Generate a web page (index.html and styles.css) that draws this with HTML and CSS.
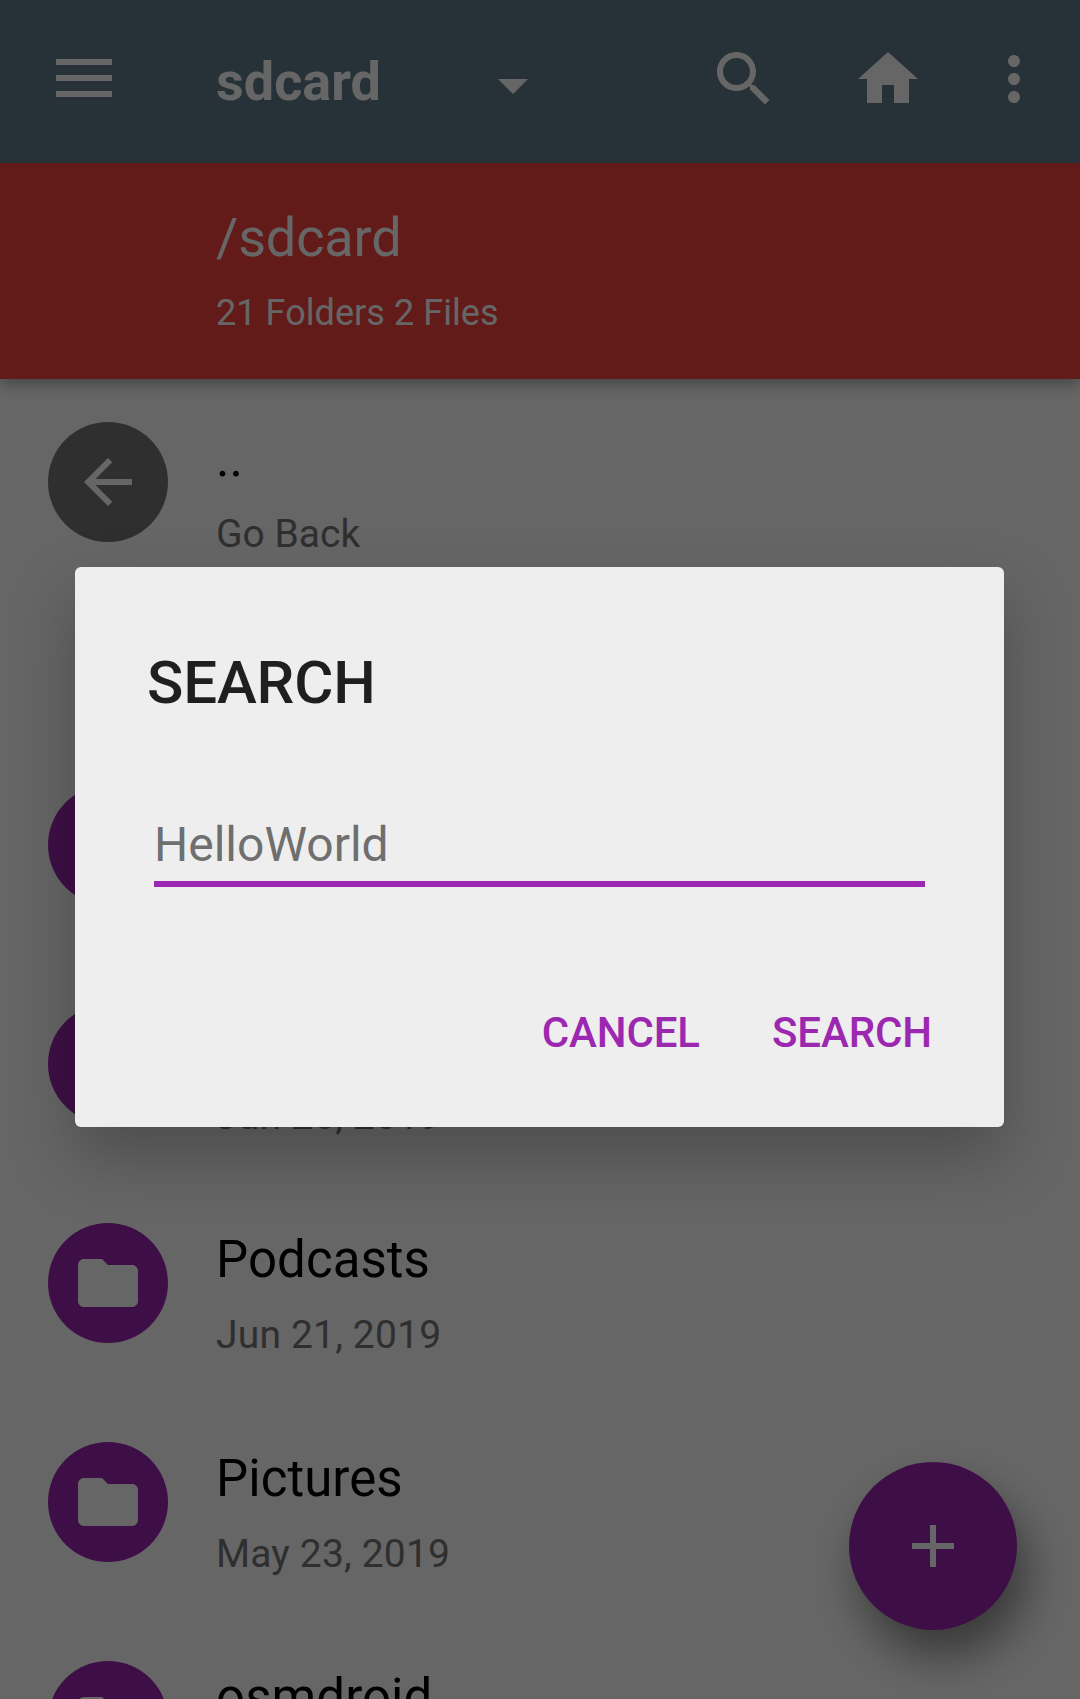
FILE: index.html
```html
<!DOCTYPE html>
<html lang="en">
<head>
<meta charset="utf-8">
<title>sdcard</title>
<link rel="stylesheet" href="styles.css">
</head>
<body>
<div class="screen">
  <header class="header">
    <div class="toolbar">
      <svg class="menu-icon" viewBox="0 0 56 38"><path d="M0 0h56v6H0zM0 16h56v6H0zM0 32h56v6H0z"/></svg>
      <h1 class="toolbar-title">sdcard</h1>
      <svg class="caret" viewBox="0 0 30 15"><path d="M0 0l15 15L30 0z"/></svg>
      <nav class="actions">
        <svg class="icon" viewBox="0 0 24 24"><path d="M15.5 14h-.79l-.28-.27C15.41 12.59 16 11.11 16 9.5 16 5.91 13.09 3 9.5 3S3 5.91 3 9.5 5.91 16 9.5 16c1.61 0 3.09-.59 4.23-1.57l.27.28v.79l5 4.99L20.49 19l-4.99-5zm-6 0C7.01 14 5 11.99 5 9.5S7.01 5 9.5 5 14 7.01 14 9.5 11.99 14 9.5 14z"/></svg>
        <svg class="icon" viewBox="0 0 24 24"><path d="M10 20v-6h4v6h5v-8h3L12 3 2 12h3v8z"/></svg>
        <svg class="icon" viewBox="0 0 24 24"><path d="M12 8c1.1 0 2-.9 2-2s-.9-2-2-2-2 .9-2 2 .9 2 2 2zm0 2c-1.1 0-2 .9-2 2s.9 2 2 2 2-.9 2-2-.9-2-2-2zm0 6c-1.1 0-2 .9-2 2s.9 2 2 2 2-.9 2-2-.9-2-2-2z"/></svg>
      </nav>
    </div>
    <div class="path-bar">
      <p class="path">/sdcard</p>
      <p class="summary">21 Folders 2 Files</p>
    </div>
  </header>

  <main class="list">
    <div class="row row-back">
      <span class="avatar avatar-grey"><svg class="icon" viewBox="0 0 24 24"><path d="M20 11H7.83l5.59-5.59L12 4l-8 8 8 8 1.41-1.41L7.83 13H20v-2z"/></svg></span>
      <div class="text"><p class="name">..</p><p class="meta">Go Back</p></div>
    </div>
    <div class="row">
      <span class="avatar"></span>
    </div>
    <div class="row">
      <span class="avatar"></span>
      <div class="text"><p class="name">&nbsp;</p><p class="meta date">Jun 26, 2019</p></div>
    </div>
    <div class="row">
      <span class="avatar"><svg class="icon" viewBox="0 0 24 24"><path d="M10 4H4c-1.1 0-1.99.9-1.99 2L2 18c0 1.1.9 2 2 2h16c1.1 0 2-.9 2-2V8c0-1.1-.9-2-2-2h-8l-2-2z"/></svg></span>
      <div class="text"><p class="name">Podcasts</p><p class="meta date">Jun 21, 2019</p></div>
    </div>
    <div class="row">
      <span class="avatar"><svg class="icon" viewBox="0 0 24 24"><path d="M10 4H4c-1.1 0-1.99.9-1.99 2L2 18c0 1.1.9 2 2 2h16c1.1 0 2-.9 2-2V8c0-1.1-.9-2-2-2h-8l-2-2z"/></svg></span>
      <div class="text"><p class="name">Pictures</p><p class="meta date">May 23, 2019</p></div>
    </div>
    <div class="row">
      <span class="avatar"><svg class="icon" viewBox="0 0 24 24"><path d="M10 4H4c-1.1 0-1.99.9-1.99 2L2 18c0 1.1.9 2 2 2h16c1.1 0 2-.9 2-2V8c0-1.1-.9-2-2-2h-8l-2-2z"/></svg></span>
      <div class="text"><p class="name">osmdroid</p></div>
    </div>
  </main>

  <div class="fab"><svg class="icon" viewBox="0 0 24 24"><path d="M19 13h-6v6h-2v-6H5v-2h6V5h2v6h6v2z"/></svg></div>

  <div class="scrim">
    <section class="dialog">
      <h2 class="dialog-title">SEARCH</h2>
      <div class="field">HelloWorld</div>
      <div class="buttons">
        <span class="button">CANCEL</span>
        <span class="button">SEARCH</span>
      </div>
    </section>
  </div>
</div>
</body>
</html>
```
FILE: styles.css
```css
* {
  box-sizing: border-box;
}

body,
h1,
h2,
p {
  margin: 0;
}

body {
  font-family: Roboto, sans-serif;
}

svg {
  display: block;
  flex: none;
  fill: #fff;
}

.icon {
  width: 72px;
  height: 72px;
}

.screen {
  position: relative;
  width: 1080px;
  height: 1699px;
  overflow: hidden;
  background: #fff;
  color: #000;
}

/* Header */
.header {
  position: relative;
  color: #fff;
  box-shadow: 0 6px 14px rgba(0, 0, 0, 0.3);
}

.toolbar {
  display: flex;
  align-items: flex-start;
  height: 163px;
  padding: 43px 30px 0 56px;
  background: #607d8b;
}

.menu-icon {
  width: 56px;
  height: 38px;
  margin-top: 16px;
}

.toolbar-title {
  width: 282px;
  margin: 7px 0 0 104px;
  font-size: 54px;
  line-height: 64px;
  font-weight: 700;
}

.caret {
  width: 30px;
  height: 15px;
  margin-top: 36px;
}

.actions {
  display: flex;
  margin-left: auto;
}

.actions .icon + .icon {
  margin-left: 72px;
}

.actions .icon:last-child {
  margin-left: 54px;
}

.path-bar {
  height: 216px;
  padding: 43px 0 0 216px;
  background: #f4443e;
}

.path {
  font-size: 54px;
  line-height: 64px;
  letter-spacing: -0.15px;
}

.summary {
  margin-top: 22px;
  font-size: 36px;
  line-height: 42px;
  letter-spacing: 0.06px;
}

/* File list */
.list {
  padding-top: 43px;
}

.row {
  display: flex;
  align-items: flex-start;
  gap: 48px;
  height: 219px;
  padding-left: 48px;
}

.row-back {
  margin-bottom: 144px;
}

.avatar {
  display: flex;
  flex: none;
  align-items: center;
  justify-content: center;
  width: 120px;
  height: 120px;
  border-radius: 50%;
  background: #9c27b0;
}

.avatar-grey {
  background: #757575;
}

.text {
  padding-top: 7px;
}

.name {
  font-size: 51px;
  line-height: 60px;
  letter-spacing: 0.06px;
}

.meta {
  margin-top: 22px;
  font-size: 39px;
  line-height: 46px;
  color: #757575;
}

.date {
  letter-spacing: 0.18px;
}

.fab {
  position: absolute;
  right: 63px;
  bottom: 69px;
  display: flex;
  align-items: center;
  justify-content: center;
  width: 168px;
  height: 168px;
  border-radius: 50%;
  background: #9c27b0;
  box-shadow: 10px 26px 46px rgba(0, 0, 0, 0.45);
}

/* Search dialog */
.scrim {
  position: absolute;
  inset: 0;
  padding: 567px 76px 0 75px;
  background: rgba(0, 0, 0, 0.6);
}

.dialog {
  height: 560px;
  padding: 81px 72px 0;
  border-radius: 6px;
  background: #eee;
  box-shadow: 0 30px 66px rgba(0, 0, 0, 0.25);
}

.dialog-title {
  font-size: 60px;
  line-height: 70px;
  font-weight: 500;
  letter-spacing: -0.15px;
  color: #1f1f1f;
}

.field {
  margin: 99px 7px 0;
  padding-bottom: 8px;
  border-bottom: 6px solid #9c27b0;
  font-size: 48px;
  line-height: 56px;
  color: #6f6f6f;
}

.buttons {
  display: flex;
  justify-content: flex-end;
  gap: 72px;
  margin-top: 121px;
}

.button {
  font-size: 42px;
  line-height: 50px;
  font-weight: 500;
  letter-spacing: -0.1px;
  color: #9c27b0;
}
```
